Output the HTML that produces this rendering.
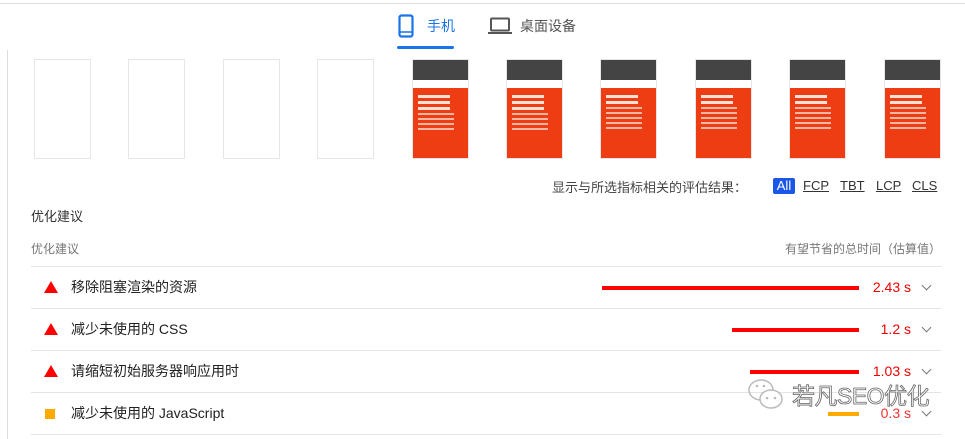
<!DOCTYPE html>
<html><head><meta charset="utf-8"><style>
body{margin:0;width:965px;height:439px;background:#fff;font-family:"Liberation Sans","Noto Sans CJK SC",sans-serif;position:relative;overflow:hidden;color:#212121}
.a{position:absolute}
.th{position:absolute;top:59px;width:55px;height:98px;border:1px solid #e6e6e6;background:#fff;overflow:hidden}
.th .d{height:20px;background:#444}
.th .w{height:8px;background:#fff}
.th .r{height:70px;background:#ee3d12;padding:4px 5px;box-sizing:border-box}
.th .r i{display:block;height:2px;background:#f7b6a4;margin:3px 0;width:80%}
.th .r b{display:block;height:3px;background:#fde0d6;margin:3px 0;width:70%}
.row{position:absolute;left:31px;width:910px;height:42px;border-top:1px solid #e4e4e4}
.row .t{position:absolute;left:40px;top:10px;font-size:14px;color:#212121}
.row .ic{position:absolute;left:13px;top:14px;width:0;height:0;border-left:7px solid transparent;border-right:7px solid transparent;border-bottom:12px solid #f00}
.row .bar{position:absolute;top:19px;height:4px;background:#f00;right:82px}
.row .v{position:absolute;right:30px;top:12px;font-size:14px;color:#e00}
.row .c{position:absolute;right:11px;top:15px;width:6px;height:6px;border-right:1.5px solid #777;border-bottom:1.5px solid #777;transform:rotate(45deg)}
.lk{position:absolute;top:178px;font-size:13px;color:#333;text-decoration:underline}
</style></head><body>
<div class="a" style="left:0;top:3px;width:965px;height:1px;background:#ddd"></div>
<div class="a" style="left:7px;top:50px;width:1px;height:389px;background:#ddd"></div>
<svg class="a" style="left:398px;top:14px" width="17" height="24"><rect x="1.5" y="1.5" width="13" height="21" rx="2" fill="none" stroke="#1a73e8" stroke-width="2.2"/><line x1="2" y1="18" x2="14" y2="18" stroke="#1a73e8" stroke-width="1.5"/></svg>
<div class="a" style="left:427px;top:16px;font-size:14px;color:#1a73e8">手机</div>
<div class="a" style="left:397px;top:46px;width:57px;height:3px;background:#1a73e8;border-radius:2px"></div>
<svg class="a" style="left:488px;top:17px" width="24" height="18"><rect x="3" y="1.5" width="18" height="12" rx="1" fill="none" stroke="#555" stroke-width="2"/><line x1="0" y1="16" x2="24" y2="16" stroke="#555" stroke-width="2"/></svg>
<div class="a" style="left:520px;top:16px;font-size:14px;color:#555">桌面设备</div>
<div class="th" style="left:34px"></div><div class="th" style="left:128px"></div><div class="th" style="left:223px"></div><div class="th" style="left:317px"></div>
<div class="th" style="left:412px"><div class="d"></div><div class="w"></div><div class="r"><b></b><b></b><b></b><i></i><i></i><i></i><i></i></div></div>
<div class="th" style="left:506px"><div class="d"></div><div class="w"></div><div class="r"><b></b><b></b><b></b><i></i><i></i><i></i><i></i></div></div>
<div class="th" style="left:600px"><div class="d"></div><div class="w"></div><div class="r"><b></b><b></b><i></i><i></i><i></i><i></i><i></i></div></div>
<div class="th" style="left:695px"><div class="d"></div><div class="w"></div><div class="r"><b></b><b></b><i></i><i></i><i></i><i></i><i></i></div></div>
<div class="th" style="left:789px"><div class="d"></div><div class="w"></div><div class="r"><b></b><b></b><i></i><i></i><i></i><i></i><i></i></div></div>
<div class="th" style="left:884px"><div class="d"></div><div class="w"></div><div class="r"><b></b><b></b><i></i><i></i><i></i><i></i><i></i></div></div>
<div class="a" style="left:552px;top:177px;font-size:13px;color:#444">显示与所选指标相关的评估结果：</div>
<div class="a" style="left:773px;top:178px;width:22px;height:16px;background:#1a56e8;color:#fff;font-size:13px;border-radius:2px;text-align:center;line-height:16px">All</div>
<div class="lk" style="left:803px">FCP</div><div class="lk" style="left:840px">TBT</div><div class="lk" style="left:876px">LCP</div><div class="lk" style="left:912px">CLS</div>
<div class="a" style="left:31px;top:206px;font-size:13px;color:#333">优化建议</div>
<div class="a" style="left:31px;top:240px;font-size:12px;color:#777">优化建议</div>
<div class="a" style="left:785px;top:240px;font-size:12px;color:#777">有望节省的总时间（估算值）</div>
<div class="row" style="top:266px"><div class="ic"></div><div class="t">移除阻塞渲染的资源</div><div class="bar" style="width:257px"></div><div class="v">2.43 s</div><div class="c"></div></div>
<div class="row" style="top:308px"><div class="ic"></div><div class="t">减少未使用的 CSS</div><div class="bar" style="width:127px"></div><div class="v">1.2 s</div><div class="c"></div></div>
<div class="row" style="top:350px"><div class="ic"></div><div class="t">请缩短初始服务器响应用时</div><div class="bar" style="width:109px"></div><div class="v">1.03 s</div><div class="c"></div></div>
<div class="row" style="top:392px"><div class="a" style="left:14px;top:16px;width:10px;height:10px;background:#fa0"></div><div class="t">减少未使用的 JavaScript</div><div class="bar" style="width:31px;background:#fa0"></div><div class="v" style="color:#e33">0.3 s</div><div class="c"></div></div>
<div class="a" style="left:31px;top:434px;width:910px;height:1px;background:#e4e4e4"></div>
<svg class="a" style="left:747px;top:378px" width="40" height="34"><ellipse cx="14" cy="12" rx="12" ry="10" fill="none" stroke="#bbb" stroke-width="1.5"/><ellipse cx="24" cy="21" rx="11" ry="9" fill="#fff" stroke="#bbb" stroke-width="1.5"/><circle cx="20" cy="20" r="1.3" fill="#bbb"/><circle cx="28" cy="20" r="1.3" fill="#bbb"/><circle cx="10" cy="8" r="1.3" fill="#bbb"/><circle cx="17" cy="8" r="1.3" fill="#bbb"/></svg>
<div class="a" style="left:792px;top:377px;font-size:23px;color:#fff;-webkit-text-stroke:0.8px #666;letter-spacing:-0.5px">若凡SEO优化</div>
</body></html>
